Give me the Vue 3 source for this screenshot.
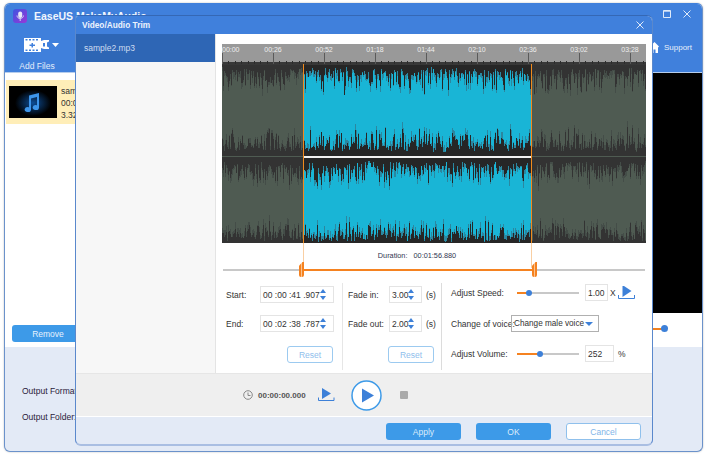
<script setup>
let seed = 12345
const rnd = () => {
  seed = (seed * 1664525 + 1013904223) >>> 0
  return seed / 4294967296
}
function layer(x0, x1, specs) {
  let dark = ''
  let mid = ''
  for (let x = x0; x < x1; x++) {
    for (const s of specs) {
      const spike = Math.pow(rnd(), 2.4) * s.range
      const h = s.base + rnd() * s.jit + spike
      const h2 = h + rnd() * 7
      const px = x + 0.5
      if (s.dir > 0) {
        dark += `M${px} ${s.y}v${h.toFixed(0)}`
        mid += `M${px} ${s.y}v${h2.toFixed(0)}`
      } else {
        dark += `M${px} ${s.y}v-${h.toFixed(0)}`
        mid += `M${px} ${s.y}v-${h2.toFixed(0)}`
      }
    }
  }
  return { dark, mid }
}
const specs = [
  { y: 20, dir: 1, base: 3, jit: 8, range: 20 },
  { y: 112, dir: -1, base: 4, jit: 7, range: 19 },
  { y: 113, dir: 1, base: 4, jit: 7, range: 19 },
  { y: 199, dir: -1, base: 1, jit: 7, range: 16 }
]
const leftWave = layer(0, 81, specs)
const midWave = layer(81, 309, specs)
const rightWave = layer(309, 424, specs)

const labels = ['00:00', '00:26', '00:52', '01:18', '01:44', '02:10', '02:36', '03:02', '03:28']
const major = labels.map((t, i) => ({ t, x: i * 51 }))
const minor = []
for (let x = 0; x < 424; x += 6.375) minor.push(Math.round(x) + 0.5)
</script>

<template>
  <div class="stage">
    <div class="main">
      <header class="head">
        <div class="title-row">
          <svg class="logo" width="14" height="14" viewBox="0 0 14 14">
            <defs>
              <linearGradient id="lg" x1="0" y1="0" x2="1" y2="1">
                <stop offset="0" stop-color="#3c56e0" />
                <stop offset="1" stop-color="#9a35d8" />
              </linearGradient>
            </defs>
            <rect width="14" height="14" rx="3" fill="url(#lg)" />
            <rect x="5.2" y="2.5" width="4" height="6.5" rx="2" fill="#e8e8f8" />
            <path d="M4 6.5c0 4 6.4 4 6.4 0M7.2 9.5v2.5" stroke="#d5d5f0" fill="none" stroke-width="1" />
          </svg>
          <span class="app-name">EaseUS MakeMyAudio</span>
          <span class="win-btns">
            <svg width="9" height="8" viewBox="0 0 9 8"><path d="M.5.5h7v7h-7z M.5 1.2h7" fill="none" stroke="#dfeaf9" /></svg>
            <svg width="8" height="8" viewBox="0 0 8 8"><path d="M.5.5l7 7M7.5.5l-7 7" stroke="#dfeaf9" /></svg>
          </span>
        </div>
        <div class="tool-row">
          <div class="add">
            <div class="add-icon">
              <svg width="26" height="16" viewBox="0 0 26 16">
                <path fill="#fff" fill-rule="evenodd" d="M0 1h17v14H0zM1.5 2v1.5h2V2zM5 2v1.5h2V2zM8.5 2v1.5h2V2zM12 2v1.5h2V2zM1.5 12.5V14h2v-1.5zM5 12.5V14h2v-1.5zM8.5 12.5V14h2v-1.5zM12 12.5V14h2v-1.5zM7.5 6v1.5H5.5v1.5h2V10.500h1.500V9h2V7.500h-2V6z" />
                <path fill="#fff" fill-rule="evenodd" d="M17 4l3-1 5 0v1.500l-2 1v4l2 1V12h-5l-3-1zM19 6v3.500h2V6z" />
              </svg>
              <svg width="7" height="4" viewBox="0 0 7 4"><path d="M0 0h7L3.500 4z" fill="#fff" /></svg>
            </div>
            <span class="add-label">Add Files</span>
          </div>
          <div class="support">
            <svg width="9" height="11" viewBox="0 0 9 11"><path fill="#fff" d="M4.500 0L9 4.500 8 5.500V11H5.500V7.500h-2V11H1V5.500L0 4.500z" /></svg>
            <span>Support</span>
          </div>
        </div>
      </header>

      <div class="body">
        <div class="list">
          <div class="item">
            <svg class="thumb" width="48" height="32" viewBox="0 0 48 32">
              <defs>
                <radialGradient id="glow" cx="0.5" cy="0.5" r="0.5">
                  <stop offset="0" stop-color="#0d4d96" />
                  <stop offset="1" stop-color="#000" />
                </radialGradient>
              </defs>
              <rect width="48" height="32" fill="#000" />
              <ellipse cx="24" cy="17" rx="18" ry="13" fill="url(#glow)" />
              <path d="M20 9.500l10-2.500v14.500a3.200 2.500 0 1 1-2-2.300V11l-6 1.500v11a3.200 2.500 0 1 1-2-2.300z" fill="#3d95ea" />
            </svg>
            <div class="meta">
              <span>sample2.mp3</span>
              <span>00:03:45</span>
              <span>3.32 MB</span>
            </div>
          </div>
          <button class="remove">Remove</button>
        </div>
        <div class="preview">
          <div class="screen"></div>
          <div class="vol"><span class="vol-line"></span><span class="vol-dot"></span></div>
        </div>
      </div>

      <div class="output">
        <span>Output Format:</span>
        <span>Output Folder:</span>
      </div>
    </div>

    <section class="dialog">
      <div class="d-title">
        <span>Video/Audio Trim</span>
        <svg width="8" height="8" viewBox="0 0 8 8"><path d="M.5.5l7 7M7.500.5l-7 7" stroke="#dfeaf9" /></svg>
      </div>
      <div class="d-content">
        <aside class="side"><div class="side-row">sample2.mp3</div></aside>
        <div class="editor">
          <div class="wave-wrap">
            <svg class="wave" width="424" height="199" viewBox="0 0 424 199" shape-rendering="crispEdges">
              <rect width="424" height="199" fill="#4f5b52" />
              <rect x="81" width="228" height="199" fill="#19b5d6" />
              <path :d="leftWave.mid" stroke="#444d48" fill="none" />
              <path :d="leftWave.dark" stroke="#333" fill="none" />
              <path :d="midWave.mid" stroke="#2b87a0" fill="none" />
              <path :d="midWave.dark" stroke="#262626" fill="none" />
              <path :d="rightWave.mid" stroke="#444d48" fill="none" />
              <path :d="rightWave.dark" stroke="#333" fill="none" />
              <rect width="424" height="20" fill="#999" />
              <rect y="18" width="424" height="3" fill="#383838" />
              <g fill="#2d2d2d">
                <rect v-for="m in minor" :key="m" :x="m - 0.5" y="17" width="1" height="3" />
              </g>
              <rect v-for="m in major" :key="m.t" :x="m.x" y="9" width="1" height="11" fill="#5a5a5a" />
              <text v-for="(m, i) in major" :key="'l' + m.t" class="tick" :x="i === 0 ? 0 : m.x" y="7.500" :text-anchor="i === 0 ? 'start' : 'middle'">{{ m.t }}</text>
              <rect x="82" y="112" width="227" height="1.500" fill="#f2f2f2" />
            </svg>
            <span class="trim trim-l"></span>
            <span class="trim trim-r"></span>
          </div>
          <div class="duration">Duration:&nbsp;&nbsp; 00:01:56.880</div>
          <div class="range">
            <span class="range-track"></span>
            <span class="range-on"></span>
            <span class="grip grip-l"></span>
            <span class="grip grip-r"></span>
          </div>
          <div class="controls">
            <div class="col col-a">
              <div class="row">
                <label>Start:</label>
                <div class="input time">00 :00 :41 .907<span class="spin"><i class="up"></i><i class="down"></i></span></div>
              </div>
              <div class="row">
                <label>End:</label>
                <div class="input time">00 :02 :38 .787<span class="spin"><i class="up"></i><i class="down"></i></span></div>
              </div>
              <button class="reset">Reset</button>
            </div>
            <div class="col col-b">
              <div class="row">
                <label>Fade in:</label>
                <div class="input small">3.00<span class="spin"><i class="up"></i><i class="down"></i></span></div>
                <em>(s)</em>
              </div>
              <div class="row">
                <label>Fade out:</label>
                <div class="input small">2.00<span class="spin"><i class="up"></i><i class="down"></i></span></div>
                <em>(s)</em>
              </div>
              <button class="reset">Reset</button>
            </div>
            <div class="col col-c">
              <div class="row r1">
                <label>Adjust Speed:</label>
                <div class="slider"><span class="on" style="width: 10px"></span><span class="knob" style="left: 10px"></span></div>
                <div class="input val">1.00</div>
                <em class="x">X</em>
                <svg class="exp" width="17" height="14" viewBox="0 0 17 14">
                  <path d="M5 0l10 6-10 6z" fill="#3d80d8" transform="translate(0 -1) scale(.9 1)" />
                  <path d="M.5 9v3.500h16V9" fill="none" stroke="#3d80d8" />
                </svg>
              </div>
              <div class="row r2">
                <label>Change of voice:</label>
                <div class="select"><span>Change male voice</span><svg width="8" height="4" viewBox="0 0 8 4"><path d="M0 0h8L4 4z" fill="#3d80d8" /></svg></div>
              </div>
              <div class="row r3">
                <label>Adjust Volume:</label>
                <div class="slider"><span class="on" style="width: 21px"></span><span class="knob" style="left: 21px"></span></div>
                <div class="input val wide">252</div>
                <em>%</em>
              </div>
            </div>
          </div>
        </div>
      </div>
      <div class="player">
        <svg class="clock" width="10" height="10" viewBox="0 0 10 10"><circle cx="5" cy="5" r="4.300" fill="none" stroke="#888" /><path d="M5 2.500V5.500h2.500" fill="none" stroke="#888" /></svg>
        <span class="now">00:00:00.000</span>
        <svg class="exp2" width="17" height="14" viewBox="0 0 17 14">
          <path d="M4 0l9 5.500-9 5.500z" fill="#3d80d8" />
          <path d="M.5 9.500v3h15.500v-3" fill="none" stroke="#3d80d8" />
        </svg>
        <svg class="play" width="31" height="31" viewBox="0 0 31 31">
          <circle cx="15.500" cy="15.500" r="14.500" fill="#fff" stroke="#3d9ae8" stroke-width="1.500" />
          <path d="M11 8.500l12 7-12 7z" fill="#3d80d8" />
        </svg>
        <span class="stop"></span>
      </div>
      <div class="foot">
        <button class="btn blue">Apply</button>
        <button class="btn blue">OK</button>
        <button class="btn ghost">Cancel</button>
      </div>
    </section>
  </div>
</template>

<style>
html, body { margin: 0; background: #fff; overflow: hidden; }
</style>

<style scoped>
.stage {
  position: relative;
  width: 707px;
  height: 456px;
  padding: 3px 4px 4px;
  box-sizing: border-box;
  font-family: "Liberation Sans", Arial, sans-serif;
  font-size: 8.5px;
  color: #333;
  overflow: hidden;
}
.main {
  height: 449px;
  display: flex;
  flex-direction: column;
  box-sizing: border-box;
  border: 1px solid #6b92cb;
  border-top-color: #4080dc;
  border-radius: 6px;
  background: #e3eaf6;
  box-shadow: 0 0 2px #bbb;
  overflow: hidden;
}
.head {
  height: 69px;
  flex: none;
  background: #4080dc;
  color: #fff;
  border-bottom: 1px solid #b6cdec;
  box-sizing: border-box;
}
.title-row {
  display: flex;
  align-items: center;
  height: 24px;
  padding: 0 11px 0 8px;
  box-sizing: border-box;
}
.app-name { margin-left: 7px; font-size: 10.5px; font-weight: bold; color: #f1f6fd; }
.win-btns { margin-left: auto; display: flex; gap: 11px; margin-top: -5px; }
.tool-row { display: flex; justify-content: space-between; }
.add { margin-left: 14px; width: 36px; display: flex; flex-direction: column; align-items: center; }
.add-icon { display: flex; align-items: center; gap: 2px; margin-left: 10px; margin-top: 9px; width: 36px; }
.add-label { margin-top: 8px; white-space: nowrap; color: #e2ecfa; }
.support { display: flex; align-items: center; gap: 5px; margin: 14px 10px 0 0; color: #e8f0fb; font-size: 8px; height: 11px; }
.body { height: 274px; flex: none; display: flex; background: #fff; }
.list { flex: 1; position: relative; padding: 7px 0 0 1px; }
.item { display: flex; height: 44px; background: #ffeeb8; padding: 6px 3px; box-sizing: border-box; gap: 4px; }
.thumb { flex: none; }
.meta { display: flex; flex-direction: column; line-height: 12px; margin-top: -1px; }
.remove {
  position: absolute;
  left: 7px;
  top: 252px;
  width: 72px;
  height: 17px;
  border: 0;
  border-radius: 3px;
  background: #3d9ae8;
  color: #e6f2fd;
  font: inherit;
  padding: 0;
}
.preview { width: 200px; flex: none; }
.screen { height: 240px; background: #000; }
.vol { position: relative; height: 34px; }
.vol-line { position: absolute; left: 140px; width: 20px; top: 15px; height: 2px; background: #f08020; }
.vol-dot { position: absolute; left: 159px; top: 12px; width: 7px; height: 7px; border-radius: 50%; background: #3d80d8; }
.output { flex: 1; display: flex; flex-direction: column; padding: 40px 0 0 17px; gap: 17px; color: #2a1a3a; }
.output span { line-height: 9px; }

.dialog {
  position: absolute;
  left: 75px;
  top: 15px;
  width: 578px;
  height: 431px;
  box-sizing: border-box;
  border: 1px solid #5a88cc;
  border-top-color: #3568b5;
  border-bottom: 2px solid #a9bee2;
  border-radius: 3px 6px 6px 6px;
  background: #e3eaf6;
  display: flex;
  flex-direction: column;
  overflow: hidden;
}
.d-title {
  height: 18px;
  flex: none;
  box-sizing: border-box;
  background: #4080dc;
  color: #edf3fc;
  display: flex;
  align-items: center;
  justify-content: space-between;
  padding: 0 8px 0 6px;
  font-weight: bold;
  font-size: 8.3px;
}
.d-content { height: 340px; flex: none; display: flex; background: #fff; border-bottom: 1px solid #e6e6e6; box-sizing: border-box; }
.side { width: 139px; flex: none; background: #f7f7f7; border-right: 1px solid #e4e4e4; }
.side-row { height: 28px; background: #2e66b5; color: #cfdcf0; line-height: 28px; padding-left: 8px; }
.editor { flex: 1; padding: 10px 0 0 6px; }
.wave-wrap { position: relative; width: 424px; height: 199px; }
.wave { display: block; }
.tick { font-size: 7px; fill: #eee; font-family: "Liberation Sans", Arial, sans-serif; }
.trim { position: absolute; top: 20px; width: 1px; height: 204px; background: linear-gradient(#f08a1d 0 179px, #f9cfa3 179px); }
.trim-l { left: 81px; }
.trim-r { left: 309px; }
.duration { height: 18px; line-height: 26px; text-align: center; color: #2f3550; font-size: 7.3px; padding-right: 40px; box-sizing: border-box; }
.range { position: relative; height: 22px; width: 424px; }
.range-track { position: absolute; left: 1px; right: 1px; top: 8px; height: 2px; background: #c8c8c8; }
.range-on { position: absolute; left: 81px; width: 229px; top: 8px; height: 2px; background: #f58220; }
.grip {
  position: absolute;
  top: 1px;
  width: 5px;
  height: 15px;
  border-radius: 0 0 2px 2px;
  background: linear-gradient(90deg, #f58220 0 2px, #fbc48f 2px 3px, #f58220 3px);
  clip-path: polygon(0 25%, 70% 0, 100% 0, 100% 100%, 0 100%);
}
.grip-l { left: 77px; }
.grip-r { left: 310px; }
.controls { height: 90px; display: flex; margin-left: -6px; }
.col { flex: none; box-sizing: border-box; display: flex; flex-direction: column; }
.col-a { width: 127px; padding: 3px 0 0 10px; border-right: 1px solid #e6e6e6; margin-bottom: 3px; }
.col-b { width: 99px; padding: 3px 0 0 5px; border-right: 1px solid #dcdcdc; margin-bottom: 3px; }
.col-c { flex: 1; padding: 1px 0 0 9px; }
.row { display: flex; align-items: center; height: 17px; margin-bottom: 12px; }
.row label { flex: none; }
.col-a label { width: 34px; }
.col-b label { width: 41px; }
.col-c label { width: 66px; }
.row em { font-style: normal; margin-left: 4px; }
.row em.x { margin-left: 2px; }
.input {
  box-sizing: border-box;
  height: 17px;
  border: 1px solid #e4e4e4;
  background: #fff;
  display: flex;
  align-items: center;
  position: relative;
  padding-left: 2px;
  white-space: nowrap;
}
.time { width: 74px; }
.small { width: 33px; }
.val { width: 23px; margin-left: 6px; }
.wide { width: 29px; padding-left: 2px; }
.spin { position: absolute; right: 7px; top: 2px; display: flex; flex-direction: column; gap: 3px; }
.spin i { display: block; width: 0; height: 0; border-left: 3px solid transparent; border-right: 3px solid transparent; }
.up { border-bottom: 4px solid #3d80d8; }
.down { border-top: 4px solid #3d80d8; }
.reset {
  margin: 2px 0 0 61px;
  width: 46px;
  height: 17px;
  padding: 0;
  background: #fff;
  border: 1px solid #9ccaf0;
  border-radius: 3px;
  color: #8fc0ec;
  font: inherit;
}
.col-b .reset { margin-left: 40px; }
.slider { position: relative; width: 62px; height: 2px; background: #c8c8c8; }
.on { position: absolute; left: 0; top: 0; height: 2px; background: #f58220; }
.knob { position: absolute; top: -2px; width: 6px; height: 6px; margin-left: -1px; border-radius: 50%; background: #3d80d8; }
.exp { margin-left: 2px; }
.r1 { margin-bottom: 14px; }
.r2 { margin-bottom: 13px; }
.select {
  width: 88px;
  height: 17px;
  box-sizing: border-box;
  margin-left: -6px;
  border: 1px solid #b0b0b0;
  padding: 0 5px 0 2px;
  display: flex;
  align-items: center;
  justify-content: space-between;
  white-space: nowrap;
  font-size: 8.2px;
}
.player { height: 42px; flex: none; background: #efefef; border-bottom: 1px solid #fff; display: flex; align-items: center; padding-left: 167px; }
.clock { flex: none; }
.now { margin-left: 5px; font-size: 8px; font-weight: bold; color: #555; }
.exp2 { margin-left: 12px; }
.play { margin-left: 16px; }
.stop { width: 8px; height: 8px; margin-left: 18px; background: #aaa; border-radius: 1px; }
.foot { flex: 1; display: flex; gap: 15px; padding: 6px 0 0 310px; box-sizing: border-box; }
.btn { width: 75px; height: 17px; border-radius: 3px; padding: 0; font: inherit; }
.blue { background: #3d9ae8; border: 0; color: #dcecfb; }
.ghost { background: #fff; border: 1px solid #8fc0ec; color: #7fb5e8; }
</style>
